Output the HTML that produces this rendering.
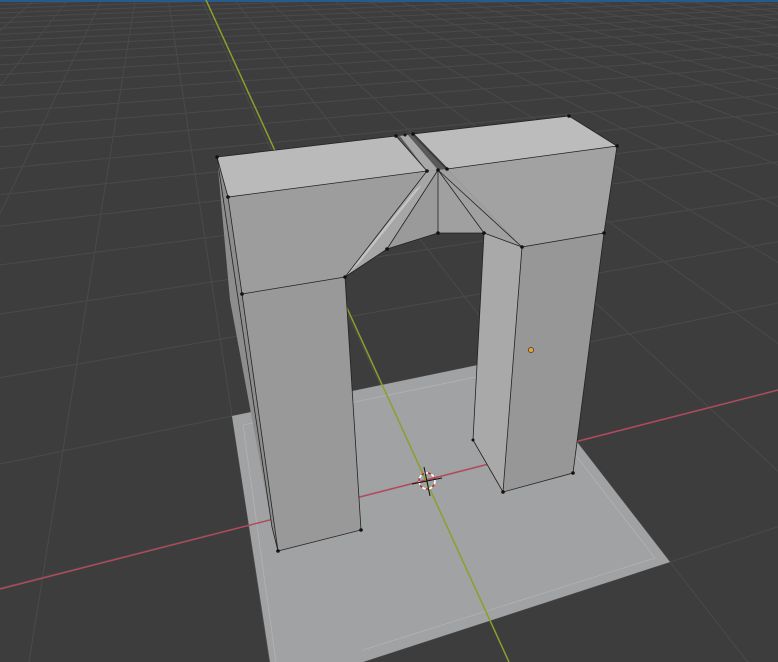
<!DOCTYPE html>
<html><head><meta charset="utf-8"><style>
html,body{margin:0;padding:0;background:#3d3d3d;overflow:hidden;width:778px;height:662px}
svg{display:block}
</style></head><body>
<svg id="s" width="778" height="662" viewBox="0 0 778 662" xmlns="http://www.w3.org/2000/svg">
<rect width="778" height="662" fill="#3d3d3d"/>
<g id="grid" stroke="#4a4a4a" stroke-width="1" fill="none"></g>
<rect x="0" y="0" width="778" height="2" fill="#2a5a8c"/>
<!-- plane -->
<polygon points="232,416 478,365 512,358 670,562 363,662 270,662" fill="#a1a2a3"/>
<polyline points="243,425 510,370 655,558 363,650" fill="none" stroke="#b2b3b4" stroke-width="0.8"/>
<line x1="243" y1="425" x2="276" y2="662" stroke="#b2b3b4" stroke-width="0.8"/>
<!-- axes -->
<line x1="0" y1="589" x2="778" y2="390" stroke="#b04a5c" stroke-width="1.5"/>
<line x1="206" y1="0" x2="509" y2="662" stroke="#8aa02c" stroke-width="1.5"/>
<!-- left pillar + block -->
<polygon points="217,157 228,197 242,294 278,551 272,527 230,300" fill="#8d8d8d"/>
<polygon points="242,294 345,277 361,530 278,551" fill="#999999"/>
<polygon points="228,197 427,171 345,277 242,294" fill="#9d9d9d"/>
<polygon points="217,157 396,136 427,171 228,197" fill="#bababa"/>
<!-- gap -->
<polygon points="396,136 413,134 447,169 438,172 427,171" fill="#5a5a5a"/>
<polygon points="400,136 408,135 438,170 427,171" fill="#a8a8a8"/>
<!-- arch underside -->
<polygon points="427,171 438,170 387,249 345,277" fill="#a6a6a6"/>
<polygon points="345,277 415,190 422,185 360,262" fill="#c4c4c4"/>
<polygon points="438,170 438,233 387,249" fill="#9a9a9a"/>
<polygon points="438,170 447,169 522,247 484,233 438,233" fill="#a0a0a0"/>
<!-- right pillar -->
<polygon points="484,233 522,247 503,492 473,440" fill="#a9a9a9"/>
<polygon points="522,247 604,233 573,473 503,492" fill="#979797"/>
<polygon points="447,169 617,146 604,233 522,247" fill="#a2a2a2"/>
<polygon points="413,134 569,116 617,146 447,169" fill="#bcbcbc"/>
<line x1="413" y1="134" x2="447" y2="169" stroke="#3a3a3a" stroke-width="2"/>
<!-- edges -->
<g stroke="#222" stroke-width="0.8" fill="none">
<polyline points="217,157 396,136 427,171 228,197 217,157"/>
<polyline points="228,197 242,294 345,277"/>
<polyline points="242,294 278,551 361,530 345,277 387,249 438,233 484,233 522,247"/>
<polyline points="217,157 272,527 278,551"/>
<polyline points="427,171 345,277"/><polyline points="438,170 387,249"/><polyline points="438,170 438,233"/>
<polyline points="438,170 484,233"/><polyline points="438,170 522,247"/>
<polyline points="413,134 569,116 617,146 447,169"/>
<polyline points="617,146 604,233 573,473 503,492 522,247 604,233"/>
<polyline points="484,233 473,440 503,492"/>
</g>
<g fill="#111">
<circle cx="217" cy="157" r="1.8"/><circle cx="396" cy="136" r="1.8"/><circle cx="427" cy="171" r="1.8"/><circle cx="228" cy="197" r="1.8"/>
<circle cx="242" cy="294" r="1.8"/><circle cx="345" cy="277" r="1.8"/><circle cx="361" cy="530" r="1.8"/><circle cx="278" cy="551" r="1.8"/>
<circle cx="387" cy="249" r="1.8"/><circle cx="438" cy="233" r="1.8"/><circle cx="484" cy="233" r="1.8"/><circle cx="522" cy="247" r="1.8"/>
<circle cx="438" cy="170" r="1.8"/><circle cx="447" cy="169" r="1.8"/><circle cx="413" cy="134" r="1.8"/><circle cx="405" cy="135" r="1.5"/>
<circle cx="569" cy="116" r="1.8"/><circle cx="617" cy="146" r="1.8"/><circle cx="604" cy="233" r="1.8"/><circle cx="573" cy="473" r="1.8"/><circle cx="503" cy="492" r="1.8"/><circle cx="473" cy="440" r="1.5"/>
</g>
<circle cx="531" cy="350" r="2.6" fill="#f0a030" stroke="#222" stroke-width="0.6"/>
<!-- 3D cursor -->
<circle cx="427" cy="481" r="8" fill="none" stroke="#fff" stroke-width="1.6" stroke-dasharray="4 3"/>
<circle cx="427" cy="481" r="8" fill="none" stroke="#c03030" stroke-width="1.6" stroke-dasharray="3 4" stroke-dashoffset="3.5"/>
<line x1="412" y1="484" x2="442" y2="478" stroke="#111" stroke-width="1"/>
<line x1="424" y1="467" x2="430" y2="496" stroke="#111" stroke-width="1"/>
</svg>
<script>
(function(){
var src=[[-1,1],[1,1],[1,-1],[-1,-1]],dst=[[232,416],[512,358],[670,562],[274,691]];
var A=[],b=[];
for(var i=0;i<4;i++){var x=src[i][0],y=src[i][1],u=dst[i][0],v=dst[i][1];
A.push([x,y,1,0,0,0,-u*x,-u*y]);b.push(u);A.push([0,0,0,x,y,1,-v*x,-v*y]);b.push(v);}
var n=8;for(var c=0;c<n;c++){var p=c;for(var r=c+1;r<n;r++)if(Math.abs(A[r][c])>Math.abs(A[p][c]))p=r;
var t=A[c];A[c]=A[p];A[p]=t;t=b[c];b[c]=b[p];b[p]=t;
for(var r=0;r<n;r++)if(r!=c){var f=A[r][c]/A[c][c];for(var k=c;k<n;k++)A[r][k]-=f*A[c][k];b[r]-=f*b[c];}}
var h=[];for(var i=0;i<n;i++)h.push(b[i]/A[i][i]);
function P(x,y){var w=h[6]*x+h[7]*y+1;return [ (h[0]*x+h[1]*y+h[2])/w,(h[3]*x+h[4]*y+h[5])/w,w];}
var g=document.getElementById('grid'),out='';
function line(fx){var pts=[];for(var s=-40;s<=40;s+=0.1){var q=fx(s);if(q[2]>0.02&&q[0]>-200&&q[0]<1000&&q[1]>-50&&q[1]<700)pts.push(q[0].toFixed(1)+','+q[1].toFixed(1));}
if(pts.length>1)out+='<polyline points="'+pts.join(' ')+'"/>';}
for(var k=-40;k<=40;k++){line(function(s){return P(k,s)});line(function(s){return P(s,k)});}
g.innerHTML=out;
})();
</script>
</body></html>
